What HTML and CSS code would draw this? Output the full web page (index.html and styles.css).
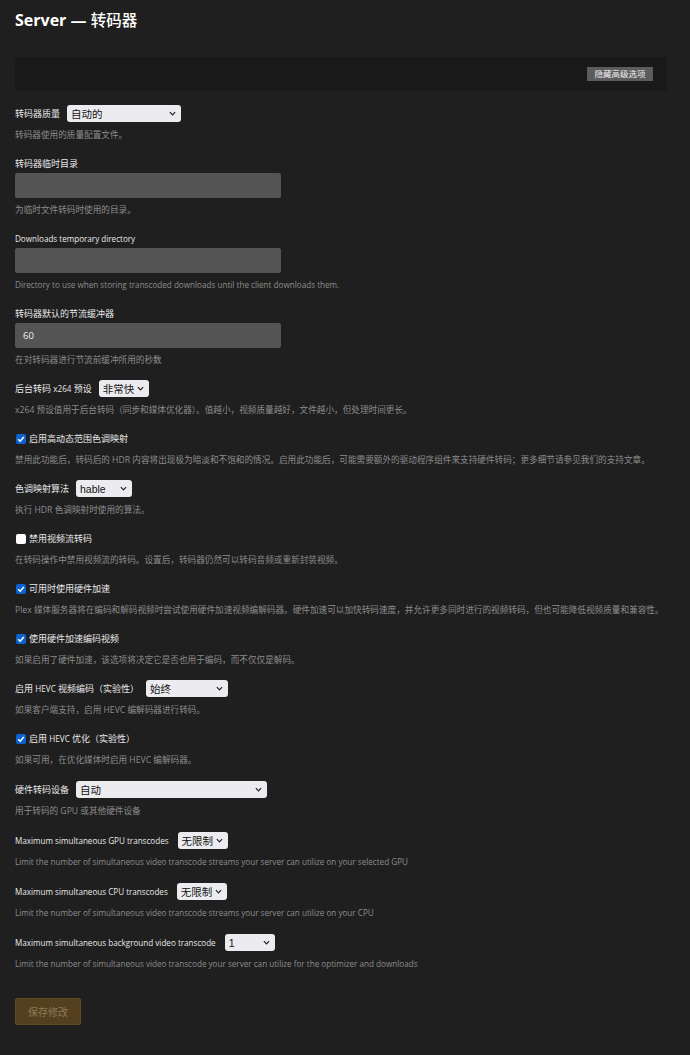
FILE: index.html
```html
<!DOCTYPE html>
<html lang="zh-CN">
<head>
<meta charset="utf-8">
<title>Server — 转码器</title>
<link rel="stylesheet" href="styles.css">
</head>
<body>
<div class="page">
  <h1 class="title">Server — <span class="title-cjk">转码器</span></h1>

  <div class="adv-bar">
    <button class="adv-btn">隐藏高级选项</button>
  </div>

  <div class="settings">
    <div class="setting">
      <div class="line">
        <span class="label">转码器质量</span>
        <div class="select w114"><span>自动的</span><svg class="chev" viewBox="0 0 8 5"><path d="M1 1l3 3 3-3" /></svg></div>
      </div>
      <div class="help">转码器使用的质量配置文件。</div>
    </div>

    <div class="setting">
      <div class="label block">转码器临时目录</div>
      <div class="input"></div>
      <div class="help help-in">为临时文件转码时使用的目录。</div>
    </div>

    <div class="setting">
      <div class="label block en">Downloads temporary directory</div>
      <div class="input"></div>
      <div class="help help-in en-help">Directory to use when storing transcoded downloads until the client downloads them.</div>
    </div>

    <div class="setting">
      <div class="label block">转码器默认的节流缓冲器</div>
      <div class="input">60</div>
      <div class="help help-in">在对转码器进行节流前缓冲所用的秒数</div>
    </div>

    <div class="setting">
      <div class="line">
        <span class="label">后台转码 <span class="en">x264</span> 预设</span>
        <div class="select w50"><span>非常快</span><svg class="chev" viewBox="0 0 8 5"><path d="M1 1l3 3 3-3" /></svg></div>
      </div>
      <div class="help">x264 预设值用于后台转码（同步和媒体优化器）。值越小，视频质量越好，文件越小，但处理时间更长。</div>
    </div>

    <div class="setting">
      <div class="line">
        <span class="check on"><svg viewBox="0 0 10 10"><path d="M2.2 5.2l2 2 3.6-4.2" /></svg></span>
        <span class="label">启用高动态范围色调映射</span>
      </div>
      <div class="help">禁用此功能后，转码后的 HDR 内容将出现极为暗淡和不饱和的情况。启用此功能后，可能需要额外的驱动程序组件来支持硬件转码；更多细节请参见我们的支持文章。</div>
    </div>

    <div class="setting">
      <div class="line">
        <span class="label">色调映射算法</span>
        <div class="select w56"><span class="latin">hable</span><svg class="chev" viewBox="0 0 8 5"><path d="M1 1l3 3 3-3" /></svg></div>
      </div>
      <div class="help">执行 HDR 色调映射时使用的算法。</div>
    </div>

    <div class="setting">
      <div class="line">
        <span class="check"></span>
        <span class="label">禁用视频流转码</span>
      </div>
      <div class="help">在转码操作中禁用视频流的转码。设置后，转码器仍然可以转码音频或重新封装视频。</div>
    </div>

    <div class="setting">
      <div class="line">
        <span class="check on"><svg viewBox="0 0 10 10"><path d="M2.2 5.2l2 2 3.6-4.2" /></svg></span>
        <span class="label">可用时使用硬件加速</span>
      </div>
      <div class="help">Plex 媒体服务器将在编码和解码视频时尝试使用硬件加速视频编解码器。硬件加速可以加快转码速度，并允许更多同时进行的视频转码，但也可能降低视频质量和兼容性。</div>
    </div>

    <div class="setting">
      <div class="line">
        <span class="check on"><svg viewBox="0 0 10 10"><path d="M2.2 5.2l2 2 3.6-4.2" /></svg></span>
        <span class="label">使用硬件加速编码视频</span>
      </div>
      <div class="help">如果启用了硬件加速，该选项将决定它是否也用于编码，而不仅仅是解码。</div>
    </div>

    <div class="setting">
      <div class="line">
        <span class="label">启用 <span class="en">HEVC</span> 视频编码（实验性）</span>
        <div class="select w82"><span>始终</span><svg class="chev" viewBox="0 0 8 5"><path d="M1 1l3 3 3-3" /></svg></div>
      </div>
      <div class="help">如果客户端支持，启用 HEVC 编解码器进行转码。</div>
    </div>

    <div class="setting">
      <div class="line">
        <span class="check on"><svg viewBox="0 0 10 10"><path d="M2.2 5.2l2 2 3.6-4.2" /></svg></span>
        <span class="label">启用 <span class="en">HEVC</span> 优化（实验性）</span>
      </div>
      <div class="help">如果可用，在优化媒体时启用 HEVC 编解码器。</div>
    </div>

    <div class="setting loose">
      <div class="line">
        <span class="label">硬件转码设备</span>
        <div class="select w191"><span>自动</span><svg class="chev" viewBox="0 0 8 5"><path d="M1 1l3 3 3-3" /></svg></div>
      </div>
      <div class="help">用于转码的 GPU 或其他硬件设备</div>
    </div>

    <div class="setting loose">
      <div class="line">
        <span class="label en">Maximum simultaneous GPU transcodes</span>
        <div class="select w50"><span>无限制</span><svg class="chev" viewBox="0 0 8 5"><path d="M1 1l3 3 3-3" /></svg></div>
      </div>
      <div class="help en-help">Limit the number of simultaneous video transcode streams your server can utilize on your selected GPU</div>
    </div>

    <div class="setting loose">
      <div class="line">
        <span class="label en">Maximum simultaneous CPU transcodes</span>
        <div class="select w50"><span>无限制</span><svg class="chev" viewBox="0 0 8 5"><path d="M1 1l3 3 3-3" /></svg></div>
      </div>
      <div class="help en-help">Limit the number of simultaneous video transcode streams your server can utilize on your CPU</div>
    </div>

    <div class="setting loose">
      <div class="line">
        <span class="label en">Maximum simultaneous background video transcode</span>
        <div class="select w50"><span class="latin">1</span><svg class="chev" viewBox="0 0 8 5"><path d="M1 1l3 3 3-3" /></svg></div>
      </div>
      <div class="help en-help">Limit the number of simultaneous video transcode your server can utilize for the optimizer and downloads</div>
    </div>
  </div>

  <button class="save">保存修改</button>
</div>
</body>
</html>
```

FILE: styles.css
```css
* { box-sizing: border-box; }

html, body {
  margin: 0;
  padding: 0;
  background: #1f1f1f;
}

body {
  font-family: "Open Sans", "Noto Sans CJK SC", sans-serif;
  color: #e6e6e6;
}

.page {
  padding: 9px 23px 30px 15px;
}

.title {
  margin: 0;
  font-size: 16px;
  line-height: 22px;
  font-weight: 700;
  color: #ffffff;
}

.title-cjk {
  font-weight: 500;
  font-size: 15.5px;
}

.adv-bar {
  margin-top: 26px;
  height: 34px;
  background: #191919;
  display: flex;
  align-items: center;
  justify-content: flex-end;
  padding-right: 14px;
}

.adv-btn {
  font-family: inherit;
  height: 14px;
  width: 66px;
  padding: 0;
  border: none;
  border-radius: 1px;
  background: #5c5c5c;
  color: #f2f2f2;
  font-size: 8.5px;
  line-height: 14px;
}

.settings {
  margin-top: 14px;
  display: flex;
  flex-direction: column;
  gap: 14px;
}

.setting {
  display: flex;
  flex-direction: column;
}

.setting.loose {
  margin-top: 1px;
}

.line {
  height: 17px;
  display: flex;
  align-items: center;
}

.label {
  font-size: 9px;
  line-height: 12px;
  color: #e8e8e8;
  margin-right: 7px;
  white-space: nowrap;
}

.label .en,
.label.en {
  font-size: 8.1px;
}

.label.en {
  margin-right: 9px;
}

.label.block {
  margin-right: 0;
  line-height: 17px;
}

.help {
  margin-top: 7px;
  font-size: 8.65px;
  line-height: 12px;
  color: #8c8c8c;
  white-space: nowrap;
}

.help.en-help {
  font-size: 8.15px;
}

.help.help-in {
  margin-top: 6px;
}

.input {
  margin-top: 1px;
  width: 266px;
  height: 25px;
  background: #545454;
  border-radius: 2px;
  color: #f0f0f0;
  font-size: 9.5px;
  line-height: 25px;
  padding-left: 8px;
}

.select {
  height: 17px;
  background: #ececf0;
  border-radius: 3px;
  display: flex;
  align-items: center;
  justify-content: space-between;
  padding: 0 5px 0 4px;
  color: #111;
  font-size: 10.5px;
}

.select .latin {
  font-family: "Liberation Sans", "Noto Sans CJK SC", sans-serif;
  font-size: 10.5px;
}

.select .chev {
  width: 7px;
  height: 5px;
  fill: none;
  stroke: #222;
  stroke-width: 1.4;
}

.w50 { width: 50px; }
.w56 { width: 56px; }
.w82 { width: 82px; }
.w114 { width: 114px; }
.w191 { width: 191px; }

.check {
  width: 10px;
  height: 10px;
  margin: 0 3px 0 1px;
  border-radius: 2px;
  background: #ffffff;
  display: inline-flex;
}

.check.on {
  background: #0b63ce;
}

.check svg {
  width: 10px;
  height: 10px;
  fill: none;
  stroke: #ffffff;
  stroke-width: 1.5;
}

.save {
  margin-top: 28px;
  font-family: inherit;
  width: 66px;
  height: 27px;
  border: 1px solid #5f4a25;
  border-radius: 2px;
  background: #54401f;
  color: #8d7a58;
  font-size: 10px;
  padding: 0;
}
```
